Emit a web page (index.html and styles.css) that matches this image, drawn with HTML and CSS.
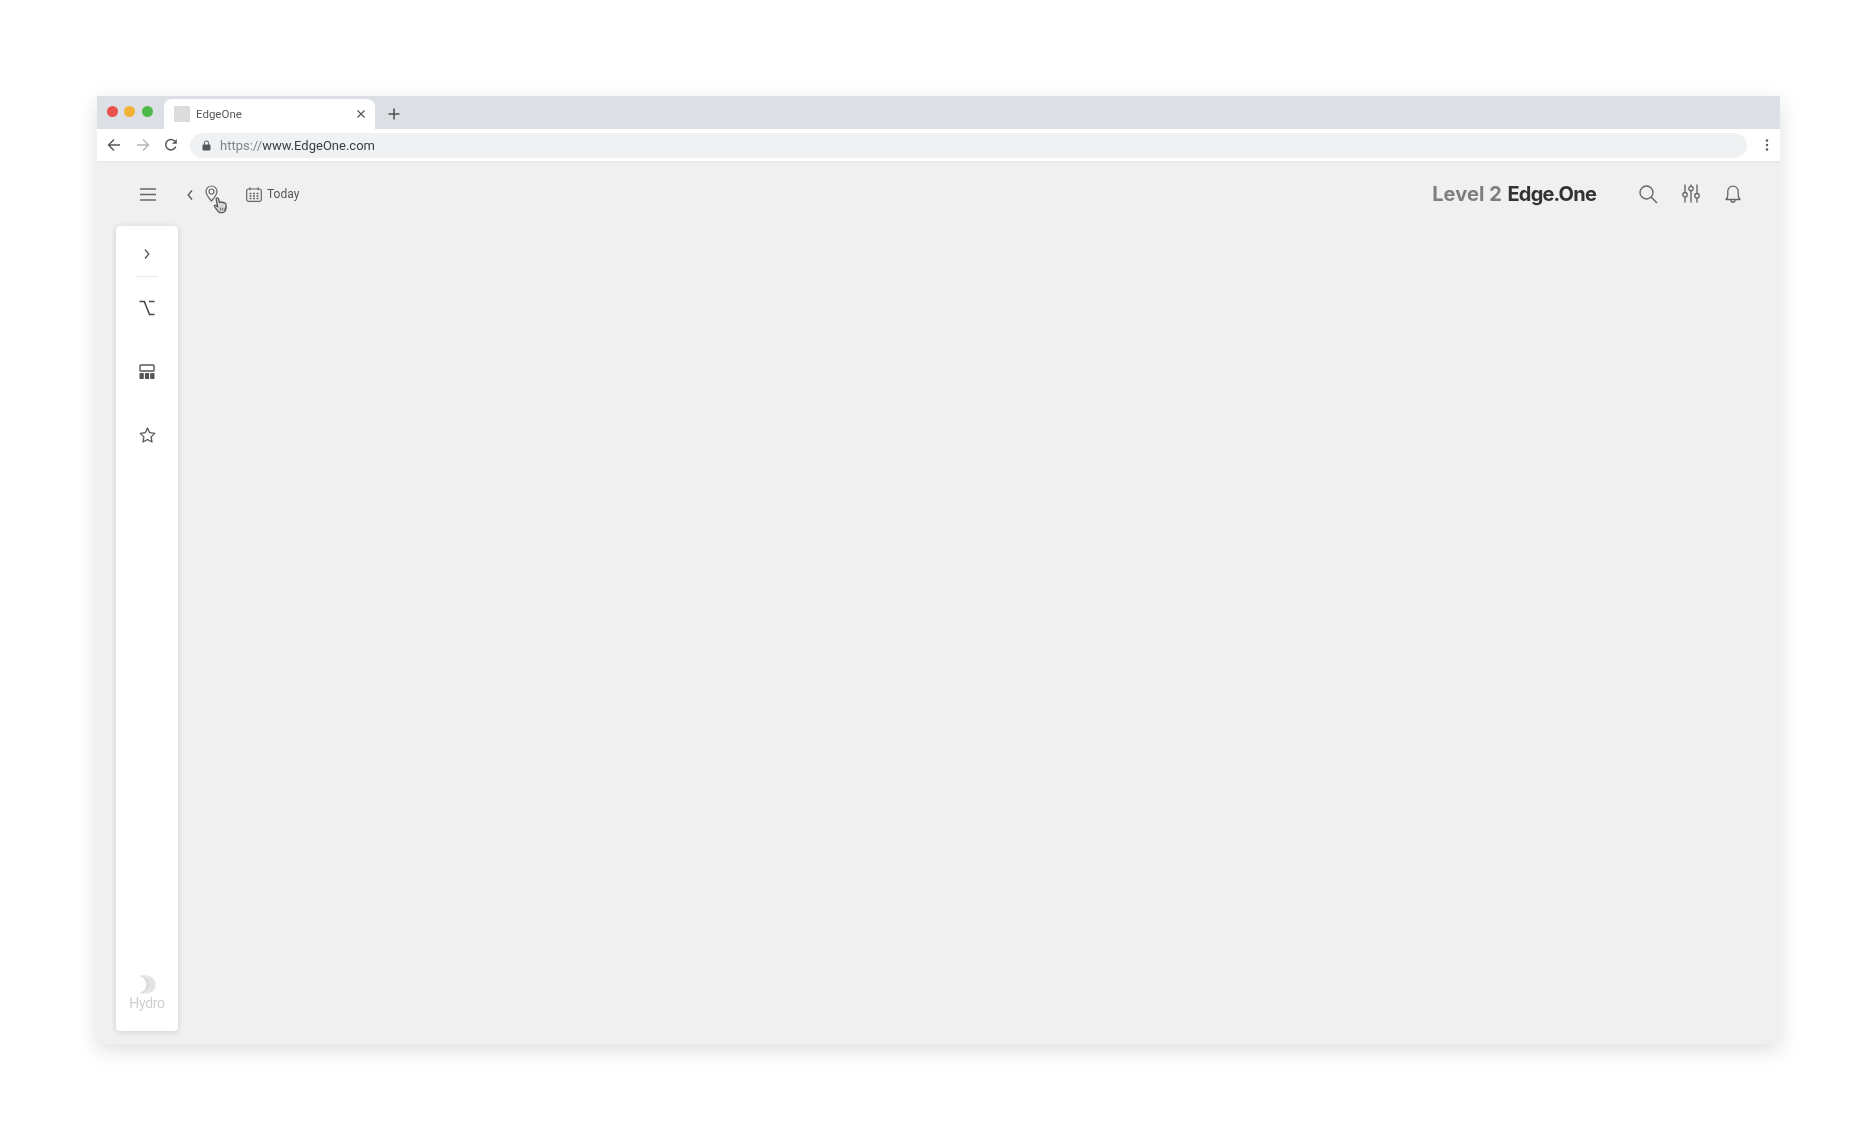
FILE: index.html
```html
<!DOCTYPE html>
<html lang="en">
<head>
<meta charset="utf-8">
<title>EdgeOne</title>
<link rel="stylesheet" href="styles.css">
</head>
<body>
<div class="window">
  <div class="tabstrip">
    <div class="lights"><span class="light red"></span><span class="light yellow"></span><span class="light green"></span></div>
    <div class="tab">
      <span class="favicon"></span>
      <span class="tab-title">EdgeOne</span>
      <svg class="tab-close" width="10" height="10" viewBox="0 0 10 10"><path d="M1.5 1.5l7 7M8.500 1.500l-7 7" stroke="#55585c" stroke-width="1.300" fill="none"/></svg>
    </div>
    <svg class="new-tab" width="12" height="12" viewBox="0 0 12 12"><path d="M6 .5v11M.5 6h11" stroke="#4f5256" stroke-width="1.600" fill="none"/></svg>
  </div>
  <div class="toolbar">
    <svg class="nav" width="14" height="14" viewBox="0 0 14 14"><path d="M13 7H2M7 1.500L1.500 7 7 12.500" stroke="#55585c" stroke-width="1.400" fill="none"/></svg>
    <svg class="nav" width="14" height="14" viewBox="0 0 14 14"><path d="M1 7h11M7 1.500L12.500 7 7 12.500" stroke="#b4b7bb" stroke-width="1.400" fill="none"/></svg>
    <svg class="nav" width="14" height="14" viewBox="0 0 14 14"><path d="M11.800 8.500A5.200 5.200 0 1 1 10.600 3" stroke="#55585c" stroke-width="1.500" fill="none"/><path d="M12.800 1v4.800H8z" fill="#55585c"/></svg>
    <div class="omnibox">
      <svg class="lock" width="9" height="11" viewBox="0 0 9 11"><path d="M2.300 5V3.200a2.200 2.200 0 0 1 4.400 0V5" stroke="#55585c" fill="none"/><rect x=".5" y="4.500" width="8" height="6" rx="1" fill="#55585c"/></svg>
      <span class="url"><span class="url-scheme">https://</span>www.EdgeOne.com</span>
    </div>
    <svg class="kebab" width="4" height="12" viewBox="0 0 4 12"><circle cx="2" cy="1.500" r="1.200" fill="#55585c"/><circle cx="2" cy="6" r="1.200" fill="#55585c"/><circle cx="2" cy="10.500" r="1.200" fill="#55585c"/></svg>
  </div>
  <div class="app">
    <header class="appbar">
      <svg class="hamburger" width="16" height="13" viewBox="0 0 16 13"><path d="M0 1h16M0 6.500h16M0 12h16" stroke="#666" stroke-width="1.400" fill="none"/></svg>
      <svg class="back" width="6" height="10" viewBox="0 0 6 10"><path d="M5 .5L1.200 5 5 9.500" stroke="#555" stroke-width="1.300" fill="none"/></svg>
      <div class="pin-wrap">
        <svg width="13" height="17" viewBox="0 0 13 17"><path d="M6.500 16C3.500 12.500 1 10 1 6.500a5.500 5.500 0 0 1 11 0C12 10 9.500 12.500 6.500 16z" stroke="#666" stroke-width="1.200" fill="none"/><circle cx="6.500" cy="6.500" r="2.500" stroke="#666" stroke-width="1.200" fill="none"/></svg>
        <svg class="cursor" width="14" height="15" viewBox="0 0 14 15"><path d="M3 1.200c.7-.7 1.600-.2 1.800.6l.9 3 1-.3c.7-.2 1.200 0 1.400.4.600-.3 1.300-.1 1.500.4.700-.2 1.500.2 1.700 1 .4 1.400.4 2.800 0 4.200-.3 1.400-1.300 3.200-3 3.200H6.500c-1.400 0-2.200-1-3-2.200L1.200 8.400c-.4-.7.500-1.500 1.300-1L4 8.500 2.800 2.600c-.1-.6-.1-1 .2-1.400z" fill="#d8d8d8" stroke="#555" stroke-width="1.100"/><path d="M6.500 9.500v2.500M8.500 9.500v2.500M10.500 9.500v2.500" stroke="#555" stroke-width=".8"/></svg>
      </div>
      <div class="date">
        <svg width="16" height="15" viewBox="0 0 16 15"><rect x=".7" y="2" width="14.600" height="12.300" rx="1.800" stroke="#666" stroke-width="1.200" fill="none"/><path d="M4 .3v3M12 .3v3" stroke="#666" stroke-width="1.200"/><path d="M3.500 6.500h2M7 6.500h2M10.500 6.500h2M3.500 9h2M7 9h2M10.500 9h2M3.500 11.500h2M7 11.500h2M10.500 11.500h2" stroke="#666" stroke-width="1.300"/></svg>
        <span class="date-label">Today</span>
      </div>
      <div class="brand"><span class="brand-level">Level 2</span> Edge.One</div>
      <div class="actions">
        <svg width="20" height="20" viewBox="0 0 20 20"><circle cx="8.500" cy="8.500" r="6.500" stroke="#666" stroke-width="1.400" fill="none"/><path d="M13.300 13.300L19 19" stroke="#666" stroke-width="1.500" fill="none"/></svg>
        <svg class="sliders" width="18" height="19" viewBox="0 0 18 19"><path d="M3 .5v8M3 13v5.500M9 .5V2M9 7v11.500M15 .5v9M15 14v4.500" stroke="#666" stroke-width="1.400" fill="none"/><circle cx="3" cy="10.700" r="2.200" stroke="#666" stroke-width="1.300" fill="none"/><circle cx="9" cy="4.500" r="2.200" stroke="#666" stroke-width="1.300" fill="none"/><circle cx="15" cy="11.700" r="2.200" stroke="#666" stroke-width="1.300" fill="none"/></svg>
        <svg width="16" height="20" viewBox="0 0 16 20"><path d="M1 15.500c1.200-1.300 1.800-2.500 1.800-4.500V7.300a5.200 5.200 0 0 1 10.400 0V11c0 2 .6 3.200 1.800 4.500z" stroke="#666" stroke-width="1.300" fill="none" stroke-linejoin="round"/><path d="M6 16c0 3 4 3 4 0" stroke="#666" stroke-width="1.300" fill="none"/></svg>
      </div>
    </header>
    <aside class="sidebar">
      <svg class="expand" width="6" height="10" viewBox="0 0 6 10"><path d="M1 .5L4.800 5 1 9.500" stroke="#555" stroke-width="1.300" fill="none"/></svg>
      <div class="side-rule"></div>
      <nav class="side-nav">
        <svg width="16" height="16" viewBox="0 0 16 16"><path d="M.5 1.500h4.800L10.500 14.500H15.500M10 1.500h5.500" stroke="#444" stroke-width="1.500" fill="none"/></svg>
        <svg width="16" height="16" viewBox="0 0 16 16"><rect x="1" y="1" width="14" height="6" rx=".8" stroke="#555" stroke-width="1.400" fill="none"/><rect x=".5" y="9" width="4.300" height="6" rx=".8" fill="#555"/><rect x="5.900" y="9" width="4.300" height="6" rx=".8" fill="#555"/><rect x="11.200" y="9" width="4.300" height="6" rx=".8" fill="#555"/></svg>
        <svg width="17" height="16" viewBox="0 0 17 16"><path d="M8.500 1l2.200 4.700 5.100.7-3.700 3.500.9 5.100-4.500-2.500L4 15l.9-5.100L1.200 6.400l5.100-.7z" stroke="#555" stroke-width="1.300" fill="none" stroke-linejoin="round"/></svg>
      </nav>
      <div class="logo">
        <svg width="18" height="19" viewBox="0 0 18 19"><path d="M0 .5h8c5.500 0 9.500 4 9.500 9s-4 9-9.500 9H0c5-1 8-4.500 8-9S5 1.500 0 .5z" fill="#dedede"/><path d="M6 1.200c4.500 1 7 4 7 8.300s-2.500 7.300-7 8.300M8.500 1.200c4.500 1 7 4 7 8.300s-2.500 7.300-7 8.300" stroke="#f4f4f4" stroke-width=".7" fill="none"/></svg>
        <span class="logo-text">Hydro</span>
      </div>
    </aside>
  </div>
</div>
</body>
</html>
```
FILE: styles.css
```css
* { box-sizing: border-box; }
html, body { margin: 0; height: 100%; background: #fff; }
body { padding: 96px 96px 0 97px; font-family: Roboto, "Liberation Sans", sans-serif; overflow: hidden; }
svg { display: block; flex: none; }

.window { width: 1683px; height: 948px; display: flex; flex-direction: column; box-shadow: 0 6px 20px rgba(0,0,0,.13); filter: blur(.4px); }

.tabstrip { height: 33px; background: #dcdfe3; display: flex; align-items: flex-end; flex: none; }
.lights { display: flex; gap: 6.500px; padding: 0 0 12px 9.500px; width: 67px; }
.light { width: 11px; height: 11px; border-radius: 50%; }
.red { background: #e8524a; }
.yellow { background: #f2b134; }
.green { background: #4cb848; }
.tab { width: 211px; height: 30px; background: #fff; border-radius: 8px 8px 0 0; display: flex; align-items: center; padding: 0 9px 0 10px; }
.favicon { width: 16px; height: 16px; background: #dcdcdc; border-radius: 1px; margin-right: 6px; }
.tab-title { font-size: 11.500px; color: #55585c; flex: 1; }
.new-tab { margin: 0 0 9px 13px; }

.toolbar { height: 34px; background: #fff; display: flex; align-items: center; padding: 0 11px 0 10px; flex: none; border-bottom: 2px solid #e9eaeb; }
.nav { margin-right: 15px; }
.toolbar .nav:nth-of-type(3) { margin-left: -1px; margin-right: 12px; }
.omnibox { flex: 1; height: 25px; background: #eff1f3; border-radius: 13px; display: flex; align-items: center; padding-left: 12px; }
.lock { margin-right: 9px; }
.url { font-size: 13px; color: #3c4043; }
.url-scheme { color: #80868b; }
.kebab { margin-left: 18px; }

.app { flex: 1; background: #f0f0f0; padding: 0 0 13px 19px; display: flex; flex-direction: column; }
.appbar { height: 63px; display: flex; align-items: center; flex: none; }
.hamburger { margin: 0 30.500px 0 24px; }
.back { margin-right: 12.500px; }
.pin-wrap { position: relative; margin: -3px 28px 0 0; }
.cursor { position: absolute; left: 8px; top: 12px; width: 16px; height: 17px; }
.date { display: flex; align-items: center; gap: 5px; }
.date-label { font-size: 12px; color: #555; margin-top: -1px; }
.brand { margin: 0 0 2px auto; font-family: Inter, "Liberation Sans", sans-serif; font-size: 20px; font-weight: 700; letter-spacing: -.8px; color: #333; white-space: pre; }
.brand-level { color: #7e7e7e; letter-spacing: .1px; margin-right: 1.500px; }
.actions { display: flex; align-items: center; gap: 24.500px; margin: 0 39px 2px 42px; }
.sliders { margin: 0 1px 0 -1px; }

.sidebar { width: 62px; flex: 1; background: #fff; border-radius: 4px; box-shadow: 0 1px 6px rgba(0,0,0,.14); display: flex; flex-direction: column; align-items: center; padding: 23px 0 20px; }
.side-rule { width: 22px; height: 1px; background: #e8e8e8; margin-top: 17px; }
.side-nav { display: flex; flex-direction: column; align-items: center; gap: 47.500px; margin-top: 23px; }
.logo { margin-top: auto; display: flex; flex-direction: column; align-items: center; gap: 1px; }
.logo-text { font-size: 14px; color: #cfcfcf; letter-spacing: -.3px; line-height: 16px; }
```
